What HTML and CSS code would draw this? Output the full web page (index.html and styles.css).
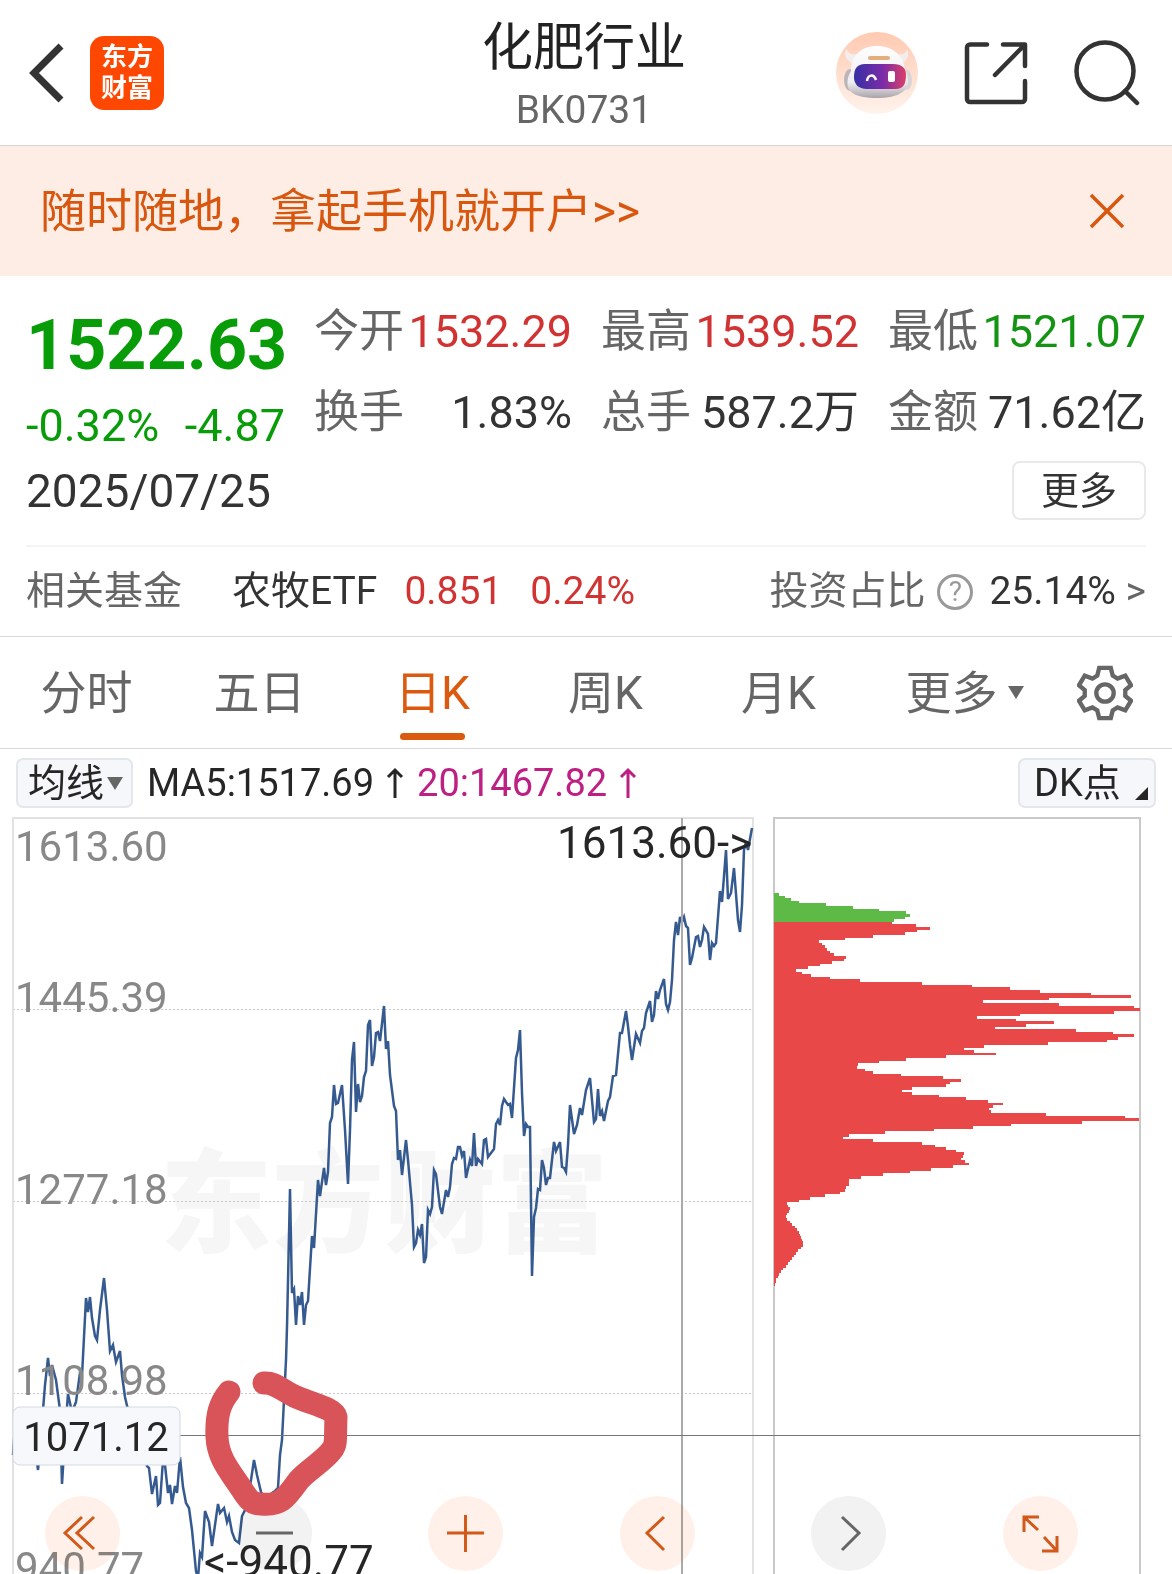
FILE: index.html
```html
<!DOCTYPE html>
<html lang="zh-CN">
<head>
    <meta charset="UTF-8">
    <meta name="viewport" content="width=device-width, initial-scale=1">
    <title>化肥行业 BK0731</title>
    <link rel="stylesheet" href="styles.css">
</head>
<body>
    <header class="topbar">
        <div class="topbar-left">
            <button class="icon-btn" type="button" aria-label="返回">
                <svg width="36" height="60" viewBox="0 0 36 60"><path d="M33 3 6 30l27 27" fill="none" stroke="#333" stroke-width="7"/></svg>
            </button>
            <a class="logo" href="#"><span>东方</span><span>财富</span></a>
        </div>
        <div class="topbar-title">
            <h1>化肥行业</h1>
            <p>BK0731</p>
        </div>
        <div class="topbar-right">
            <button class="icon-btn" type="button" aria-label="智能助手">
                <svg width="82" height="82" viewBox="0 0 82 82">
                    <defs>
                        <linearGradient id="halo" x1="0" y1="0" x2="0" y2="1">
                            <stop offset="0" stop-color="#ffc9b0"/>
                            <stop offset="1" stop-color="#fff3ec"/>
                        </linearGradient>
                        <linearGradient id="helmet" x1="0" y1="0" x2="0" y2="1">
                            <stop offset="0" stop-color="#fff"/>
                            <stop offset=".7" stop-color="#efedf0"/>
                            <stop offset="1" stop-color="#aaa4aa"/>
                        </linearGradient>
                        <linearGradient id="visor" x1="0" y1="0" x2="1" y2="0">
                            <stop offset="0" stop-color="#3730a5"/>
                            <stop offset=".55" stop-color="#7a2ba8"/>
                            <stop offset="1" stop-color="#dc3f68"/>
                        </linearGradient>
                    </defs>
                    <circle cx="41" cy="41" r="41" fill="url(#halo)"/>
                    <path d="M18 32C9 28 8 23 10 17c3 5 6 6 12 5zM63 22c5 1 7-1 8-5 3 7 0 12-7 15z" fill="#f3eeee"/>
                    <ellipse cx="14" cy="48" rx="6" ry="11" fill="#b9b5b9"/>
                    <ellipse cx="71" cy="48" rx="5" ry="10" fill="#d9d4d8"/>
                    <path d="M15 39c0-15 10-25 26-25s27 10 28 24c4 6 4 17-1 21-8 6-17 7-27 7s-21-1-27-7c-4-5-3-14 1-20z" fill="url(#helmet)"/>
                    <rect x="32" y="24" width="22" height="4" rx="2" fill="#e3ae7c"/>
                    <path d="M29 32h28c9 0 13 4 13 11 0 9-3 14-10 14H31c-9 0-13-5-13-12 0-8 3-13 11-13z" fill="url(#visor)"/>
                    <path d="M31 49c1-7 7-7 9-1" fill="none" stroke="#fff" stroke-width="2.5"/>
                    <rect x="52" y="39" width="7" height="11" rx="2" fill="#fff"/>
                </svg>
            </button>
            <button class="icon-btn" type="button" aria-label="分享">
                <svg width="64" height="64" viewBox="0 0 64 64" fill="none" stroke="#333" stroke-width="4.5" stroke-linecap="round" stroke-linejoin="round"><path d="M23 3.500H6a3 3 0 0 0-3 3V58a3 3 0 0 0 3 3h52a3 3 0 0 0 3-3V40M39 3.500h22V25M60 4.500 31 34"/></svg>
            </button>
            <button class="icon-btn" type="button" aria-label="搜索">
                <svg width="66" height="66" viewBox="0 0 66 66" fill="none" stroke="#333" stroke-width="4.500" stroke-linecap="round"><circle cx="31" cy="31" r="28.500"/><path d="M51 51 63 63"/></svg>
            </button>
        </div>
    </header>

    <div class="promo">
        <a href="#">随时随地，拿起手机就开户&gt;&gt;</a>
        <button class="icon-btn" type="button" aria-label="关闭">
            <svg width="36" height="36" viewBox="0 0 36 36"><path d="M2 2 34 34M34 2 2 34" stroke="#d9560f" stroke-width="3.500"/></svg>
        </button>
    </div>

    <section class="quote">
        <div class="quote-main">
            <div class="quote-price">
                <strong>1522.63</strong>
                <p><span>-0.32%</span><span>-4.87</span></p>
            </div>
            <dl class="stats">
                <div><dt>今开</dt><dd class="up">1532.29</dd></div>
                <div><dt>最高</dt><dd class="up">1539.52</dd></div>
                <div><dt>最低</dt><dd class="down">1521.07</dd></div>
                <div><dt>换手</dt><dd>1.83%</dd></div>
                <div><dt>总手</dt><dd>587.2万</dd></div>
                <div><dt>金额</dt><dd>71.62亿</dd></div>
            </dl>
        </div>
        <div class="quote-date">
            <time datetime="2025-07-25">2025/07/25</time>
            <button class="more-btn" type="button">更多</button>
        </div>
        <div class="fund">
            <span class="muted">相关基金</span>
            <a class="fund-name" href="#">农牧ETF</a>
            <span class="up">0.851</span>
            <span class="up fund-pct">0.24%</span>
            <span class="muted fund-ratio">投资占比</span>
            <button class="help-btn" type="button" aria-label="说明">?</button>
            <a class="fund-link" href="#">25.14% <span class="muted">&gt;</span></a>
        </div>
    </section>

    <nav class="tabs">
        <button type="button">分时</button>
        <button type="button">五日</button>
        <button class="active" type="button">日K</button>
        <button type="button">周K</button>
        <button type="button">月K</button>
        <button class="has-menu" type="button">更多</button>
        <button type="button" aria-label="设置">
            <svg width="56" height="56" viewBox="0 0 58 58" fill="none" stroke="#666" stroke-width="4.500"><path d="M23 3h12l2 8 5 3 8-3 6 10-6 5v6l6 5-6 10-8-3-5 3-2 8H23l-2-8-5-3-8 3-6-10 6-5v-6l-6-5 6-10 8 3 5-3z"/><circle cx="29" cy="29" r="9"/></svg>
        </button>
    </nav>

    <div class="legend">
        <button class="chip chip-ma" type="button">均线</button>
        <span>MA5:1517.69</span>
        <svg class="arrow" width="18" height="32" viewBox="0 0 18 32"><path d="M9 31V3M2 10l7-7 7 7"/></svg>
        <span class="ma20">20:1467.82</span>
        <svg class="arrow ma20" width="18" height="32" viewBox="0 0 18 32"><path d="M9 31V3M2 10l7-7 7 7"/></svg>
        <button class="chip chip-dk" type="button">DK点</button>
    </div>

    <main class="chart">
        <svg class="plot" viewBox="0 817 1172 757" role="img" aria-label="日K走势与筹码分布">
            <text class="watermark" x="160" y="1244">东方财富</text>
            <path class="grid" d="M13 1009.500H753M13 1201.500H753M13 1393.500H753"/>
            <path class="frame" d="M13 1574V818H753V1574"/>
            <path class="frame-dark" d="M774 1574V818H1140V1574"/>
            <g id="chips"></g>
            <polyline class="price" points="13,1455 14,1440 20,1450 28,1440 36,1455 38,1470 40,1450 43,1410 45,1385 48,1358 50,1376 52,1365 56,1380 60,1410 62,1484 66,1420 68,1394 72,1412 76,1402 80,1373 82,1376 86,1298 88,1312 90,1297 92,1318 95,1336 97,1340 100,1310 104,1278 107,1310 110,1351 113,1345 114,1351 116,1362 120,1351 122,1375 125,1397 128,1410 135,1430 142,1450 147,1466 149,1468 152,1494 156,1476 158,1505 160,1503 163,1460 165,1465 168,1493 170,1485 172,1504 175,1486 177,1493 180,1457 183,1487 186,1503 189,1508 192,1530 196,1571 198,1578 200,1553 202,1557 205,1511 209,1522 212,1546 218,1504 220,1513 224,1508 227,1522 229,1516 232,1532 235,1540 239,1543 242,1516 246,1508 251,1480 254,1460 257,1475 261,1492 265,1500 268,1501 272,1493 275,1491 278,1488 280,1455 282,1440 284,1400 286,1360 287,1327 290,1189 292,1293 294,1289 296,1325 298,1296 300,1305 302,1292 304,1325 306,1305 308,1301 312,1236 314,1248 318,1180 320,1196 324,1168 326,1185 328,1172 330,1123 332,1117 334,1085 336,1104 338,1103 342,1085 345,1130 348,1184 350,1130 352,1060 354,1042 356,1112 358,1084 360,1102 362,1096 364,1077 366,1071 368,1025 370,1020 372,1066 374,1057 376,1033 378,1032 380,1041 384,1006 386,1049 388,1041 390,1075 394,1106 396,1111 398,1160 400,1150 402,1175 406,1140 408,1160 412,1205 414,1247 416,1243 418,1230 420,1235 422,1224 424,1263 426,1257 428,1210 430,1214 432,1207 434,1170 436,1174 440,1207 442,1214 446,1190 448,1197 450,1187 452,1164 454,1158 456,1159 458,1147 460,1147 462,1156 464,1151 466,1178 470,1160 472,1166 474,1133 476,1166 478,1159 482,1164 484,1140 486,1139 488,1157 491,1153 494,1149 496,1124 498,1120 500,1125 502,1106 504,1099 508,1105 510,1104 512,1118 516,1058 518,1050 520,1030 522,1093 524,1136 526,1124 528,1127 530,1127 532,1276 534,1217 536,1208 538,1189 540,1190 542,1160 544,1168 546,1185 548,1178 550,1178 554,1142 556,1151 560,1142 562,1167 564,1168 566,1172 568,1145 570,1105 574,1134 577,1125 580,1108 582,1115 586,1090 590,1078 594,1122 596,1119 598,1089 600,1116 602,1111 604,1121 608,1101 610,1097 613,1076 616,1075 620,1033 622,1033 626,1011 628,1026 630,1045 632,1060 636,1034 640,1043 642,1031 644,1028 646,1013 650,1001 652,1022 654,1015 656,991 658,999 660,990 664,979 666,1004 668,1010 670,1002 672,980 674,940 676,922 678,935 680,917 682,922 684,917 686,926 688,928 690,965 692,958 696,937 698,936 700,947 702,940 704,927 708,934 710,960 712,943 714,946 716,943 720,891 722,902 726,850 728,899 731,893 734,868 738,920 740,932 742,905 744,850 746,842 748,850 752,828"/>
            <path class="cross" d="M682 818V1574"/>
            <path class="cross cross-h" d="M180 1435.500H1140"/>
            <g class="axis">
                <text x="15" y="861">1613.60</text>
                <text x="15" y="1012">1445.39</text>
                <text x="15" y="1204">1277.18</text>
                <text x="15" y="1395">1108.98</text>
                <text x="15" y="1582">940.77</text>
            </g>
            <g class="mark">
                <text x="557" y="858">1613.60-&gt;</text>
                <text x="204" y="1577">&lt;-940.77</text>
            </g>
            <rect class="tag" x="13" y="1407" width="167" height="58" rx="7"/>
            <text class="tag-text" x="96" y="1451">1071.12</text>
        </svg>

        <div class="tools">
            <button type="button" aria-label="最早"><svg viewBox="0 0 75 75"><path d="M37 21 20 37l17 16M49 21 32 37l17 16"/></svg></button>
            <button class="off" type="button" aria-label="缩小"><svg viewBox="0 0 75 75"><path d="M19 37h37"/></svg></button>
            <button type="button" aria-label="放大"><svg viewBox="0 0 75 75"><path d="M19 37h37M37.500 19v37"/></svg></button>
            <button type="button" aria-label="左移"><svg viewBox="0 0 75 75"><path d="M44 21 27 37l17 17"/></svg></button>
            <button class="off" type="button" aria-label="右移"><svg viewBox="0 0 75 75"><path d="M31 21 48 37 31 54"/></svg></button>
            <button type="button" aria-label="全屏"><svg viewBox="0 0 75 75"><path d="M21 36V21h15M21 21l14 13M54 40v15H39M54 55 41 41"/></svg></button>
        </div>

        <!-- hand-drawn circle around the breakout -->
        <svg class="scribble" viewBox="0 817 1172 757" aria-hidden="true">
            <path d="M229 1392C220 1403 216 1415 217 1437C218 1458 229 1470 241 1488C248 1499 251 1504 261 1504C281 1506 286 1498 299 1480C309 1469 324 1461 332 1450C337 1444 335 1437 336 1417C334 1408 311 1404 294 1396C280 1389 274 1382 264 1383"/>
        </svg>
    </main>

    <script>
        // chip distribution, top price first; ORIGIN is empty, FULL reaches the right edge
        var ORIGIN = 42, FULL = 1140;
        var profit = [58, 76, 93, 117, 198, 278, 358, 438, 451, 436, 403];
        var loss = [
            395, 469, 510, 472, 435, 338, 254, 177, 186, 194, 202, 211, 223, 258, 253, 216, 180, 143, 107, 127,
            153, 210, 300, 485, 636, 749, 841, 994, 1114, 867, 670, 897, 1122, 1140, 1062, 781, 652, 768, 883, 797,
            706, 948, 1058, 1123, 1075, 1041, 864, 672, 613, 642, 707, 558, 438, 357, 294, 292, 316, 339, 423, 548,
            602, 571, 558, 455, 427, 457, 536, 617, 685, 728, 698, 688, 692, 859, 1096, 1138, 966, 752, 639, 521,
            375, 266, 249, 338, 485, 525, 559, 588, 613, 609, 604, 614, 627, 580, 514, 450, 369, 304, 268, 267,
            267, 259, 255, 241, 195, 150, 117, 81, 84, 89, 86, 81, 79, 80, 90, 97, 105, 112, 116, 121,
            124, 127, 128, 128, 122, 115, 108, 101, 96, 90, 83, 77, 70, 64, 58, 53, 49, 47, 45
        ];
        var step = 2.62;
        var group = document.getElementById('chips');

        function drawBars(values, startRow, color) {
            values.forEach(function(value, i) {
                var bar = document.createElementNS('http://www.w3.org/2000/svg', 'rect');
                bar.setAttribute('x', 774);
                bar.setAttribute('y', 893 + (startRow + i) * step);
                bar.setAttribute('width', (value - ORIGIN) / (FULL - ORIGIN) * 366);
                bar.setAttribute('height', step);
                bar.setAttribute('fill', color);
                group.appendChild(bar);
            });
        }

        drawBars(profit, 0, '#5dba47');
        drawBars(loss, profit.length, '#e84848');
    </script>
</body>
</html>
```
FILE: styles.css
```css
* {
    box-sizing: border-box;
}

body {
    margin: 0;
    background: #fff;
    color: #333;
    font-family: Roboto, "Noto Sans CJK SC", sans-serif;
    font-size: 38px;
    line-height: 1;
}

h1, p, dl, dd {
    margin: 0;
}

a {
    color: inherit;
    text-decoration: none;
}

button {
    padding: 0;
    border: 0;
    background: none;
    color: inherit;
    font: inherit;
    cursor: pointer;
}

svg {
    display: block;
}

.up {
    color: #d13333;
}

.down {
    color: #139413;
}

.muted {
    color: #666;
}

/* header */
.topbar {
    display: grid;
    grid-template-columns: 1fr auto 1fr;
    align-items: center;
    height: 146px;
    padding: 0 32px 0 28px;
    border-bottom: 1px solid #d5d8d8;
}

.topbar-left,
.topbar-right {
    display: flex;
    align-items: center;
}

.topbar-left {
    gap: 26px;
}

.topbar-right {
    justify-content: flex-end;
    gap: 46px;
}

.logo {
    display: flex;
    flex-direction: column;
    justify-content: center;
    align-items: center;
    width: 74px;
    height: 74px;
    border-radius: 14px;
    background: #fe4700;
    color: #fff;
    font-size: 26px;
    font-weight: 700;
    line-height: 31px;
}

.topbar-title {
    padding-top: 8px;
    text-align: center;
}

.topbar-title h1 {
    color: #222;
    font-size: 51px;
    font-weight: 400;
    line-height: 66px;
}

.topbar-title p {
    color: #666;
    font-size: 39px;
    line-height: 58px;
}

/* promo banner */
.promo {
    display: flex;
    justify-content: space-between;
    align-items: center;
    height: 130px;
    padding: 0 47px 0 40px;
    background: #fdede4;
    color: #d9560f;
    font-size: 46px;
}

/* quote */
.quote {
    padding: 26px 26px 0;
    border-bottom: 1px solid #d5d8d8;
}

.quote-main {
    display: grid;
    grid-template-columns: 259px 1fr;
    gap: 29px;
}

.quote-price {
    padding-top: 8px;
    color: #089c08;
}

.quote-price strong {
    display: block;
    font-size: 70px;
    line-height: 70px;
}

.quote-price p {
    display: flex;
    justify-content: space-between;
    padding-top: 24px;
    font-size: 45px;
    line-height: 44px;
}

.stats {
    display: grid;
    grid-template-columns: repeat(3, 1fr);
    align-content: start;
    gap: 21px 29px;
    font-size: 45px;
    line-height: 60px;
}

.stats div {
    display: flex;
    justify-content: space-between;
    height: 60px;
    white-space: nowrap;
}

.stats dt {
    color: #666;
}

.quote-date {
    display: flex;
    justify-content: space-between;
    align-items: center;
    padding: 13px 0 25px;
    border-bottom: 2px solid #f4f4f4;
    font-size: 46px;
}

.more-btn {
    width: 134px;
    height: 59px;
    border: 2px solid #e8eaea;
    border-radius: 8px;
    font-size: 38px;
}

.fund {
    display: flex;
    align-items: center;
    height: 89px;
    font-size: 39px;
    white-space: nowrap;
}

.fund-name {
    margin: 0 27px 0 50px;
}

.fund-pct {
    margin-left: 28px;
}

.fund-ratio {
    margin-left: auto;
}

.help-btn {
    width: 36px;
    height: 36px;
    margin: 0 16px 0 12px;
    border: 3px solid #999;
    border-radius: 50%;
    color: #999;
    font-size: 28px;
}

/* period tabs */
.tabs {
    display: grid;
    grid-template-columns: repeat(6, 1fr) 134px;
    height: 112px;
    border-bottom: 1px solid #d5d8d8;
    color: #666;
    font-size: 46px;
}

.tabs button {
    position: relative;
    display: flex;
    justify-content: center;
    align-items: center;
}

.tabs .active {
    color: #dc5a10;
}

.tabs .active::after {
    content: "";
    position: absolute;
    bottom: 8px;
    width: 65px;
    height: 7px;
    border-radius: 4px;
    background: #dc5a10;
}

.tabs .has-menu::after {
    content: "";
    position: absolute;
    right: 14px;
    border: 8px solid transparent;
    border-top: 13px solid #666;
    border-bottom: 0;
}

/* chart legend */
.legend {
    display: flex;
    align-items: center;
    height: 68px;
    padding: 0 16px;
    color: #262626;
    white-space: nowrap;
}

.chip {
    display: flex;
    align-items: center;
    height: 50px;
    border: 2px solid #e4e7ea;
    border-radius: 7px;
    background: #f6f7fa;
}

.chip-ma {
    gap: 3px;
    width: 117px;
    margin-right: 14px;
    padding-left: 10px;
}

.chip-ma::after {
    content: "";
    border: 8px solid transparent;
    border-top: 13px solid #666;
    border-bottom: 0;
}

.chip-dk {
    gap: 14px;
    width: 138px;
    margin-left: auto;
    padding-left: 14px;
}

.chip-dk::after {
    content: "";
    align-self: flex-end;
    margin-bottom: 6px;
    border-bottom: 13px solid #262626;
    border-left: 13px solid transparent;
}

.arrow {
    margin: 0 13px 0 12px;
    fill: none;
    stroke: #262626;
    stroke-width: 3;
}

.ma20 {
    color: #bd1f83;
    stroke: #bd1f83;
}

span.ma20 {
    stroke: none;
}

/* chart */
.chart {
    position: relative;
    overflow: hidden;
}

.plot,
.scribble {
    width: 100%;
}

.plot text {
    font-size: 42px;
}

.plot .watermark {
    fill: #f6f6f6;
    font-size: 112px;
    font-weight: 900;
}

.grid {
    stroke: #c9c9c9;
    stroke-dasharray: 2 2;
}

.frame,
.frame-dark {
    fill: none;
    stroke: #e2e2e2;
    stroke-width: 2;
}

.frame-dark {
    stroke: #c9c9c9;
}

#chips {
    shape-rendering: crispEdges;
}

.price {
    fill: none;
    stroke: #355a8f;
    stroke-width: 2.5;
}

.cross {
    stroke: #aaa;
    stroke-width: 2;
}

.cross-h {
    stroke: #777;
    stroke-width: 1;
}

.axis {
    fill: #888;
}

.mark,
.tag-text {
    fill: #262626;
}

.plot .mark text {
    font-size: 44px;
}

.tag {
    fill: #f6f8fb;
    stroke: #d5d9df;
}

.plot .tag-text {
    font-size: 40px;
    text-anchor: middle;
}

.tools {
    position: absolute;
    right: 94px;
    bottom: 3px;
    left: 45px;
    display: flex;
    justify-content: space-between;
    mix-blend-mode: multiply;
}

.tools button {
    width: 75px;
    height: 75px;
    border-radius: 50%;
    background: #fff1e9;
}

.tools .off {
    background: #f2f2f2;
}

.tools path {
    fill: none;
    stroke: #d1591a;
    stroke-width: 3;
}

.tools .off path {
    stroke: #666;
}

.scribble {
    position: absolute;
    top: 0;
    left: 0;
    pointer-events: none;
}

.scribble path {
    fill: none;
    stroke: #d95459;
    stroke-width: 23;
    stroke-linecap: round;
    stroke-linejoin: round;
}
```
